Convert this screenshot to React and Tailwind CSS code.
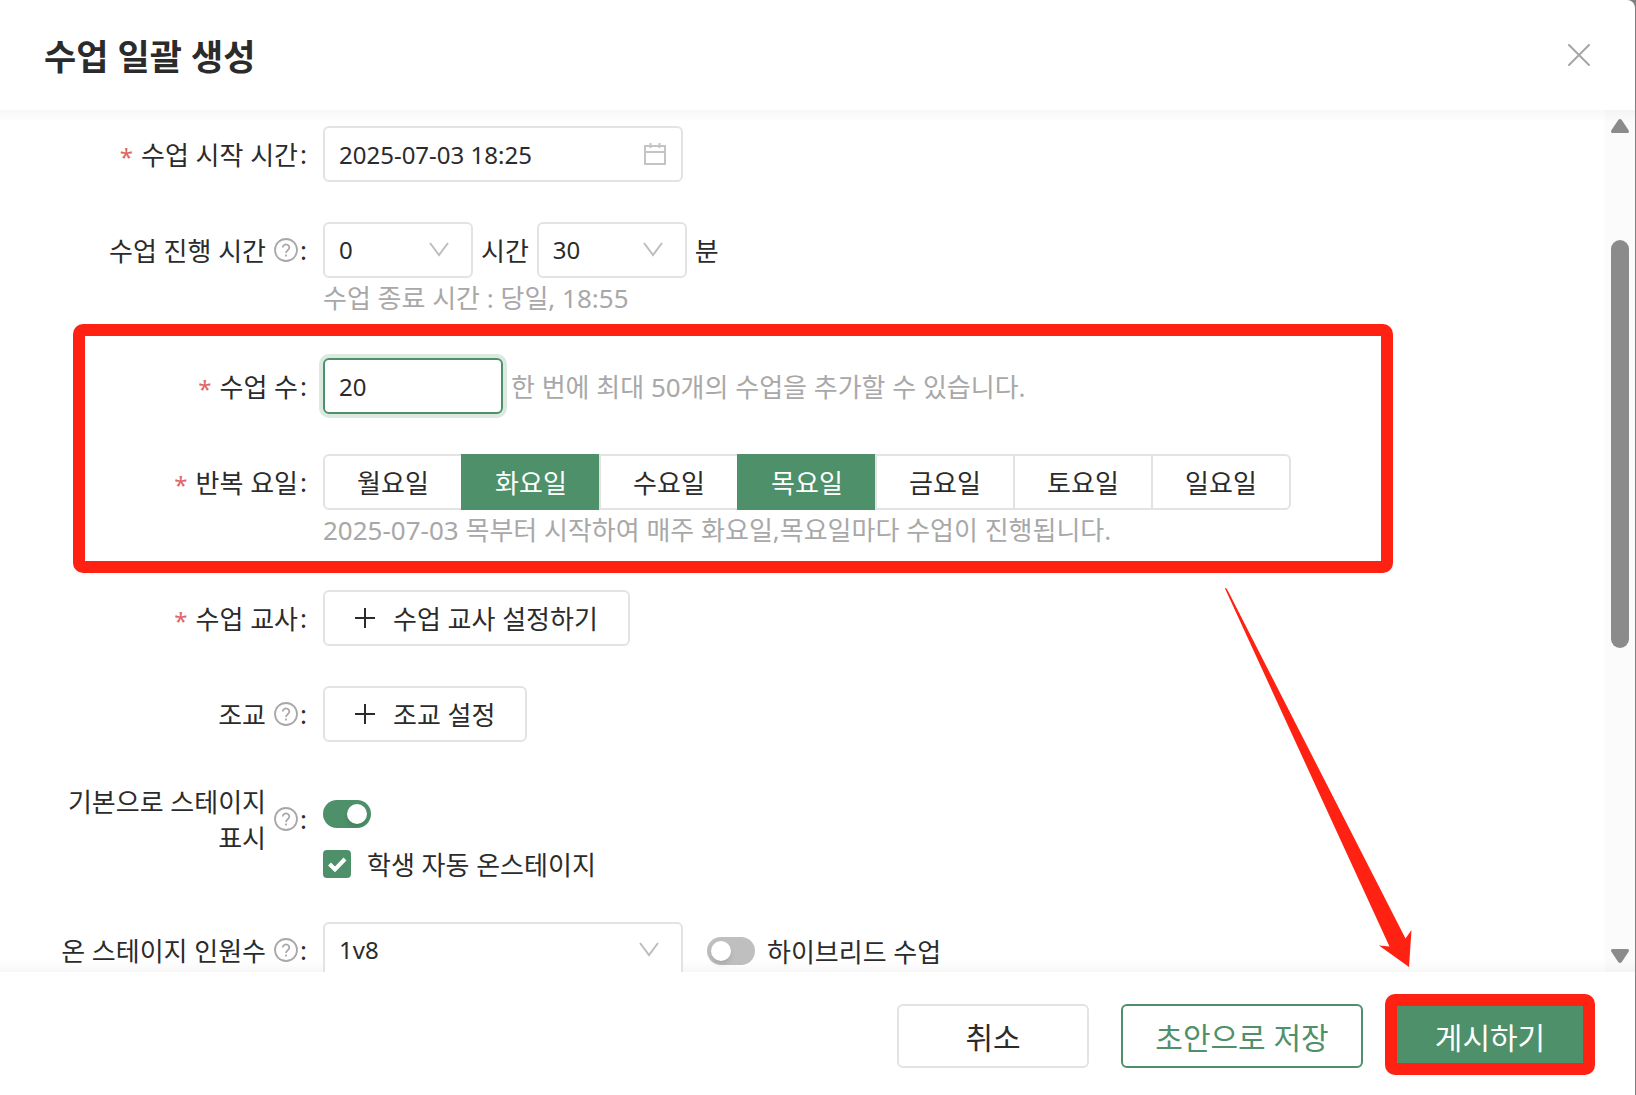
import React, { useState } from 'react';

const DAYS = ['월요일', '화요일', '수요일', '목요일', '금요일', '토요일', '일요일'];

function HelpIcon() {
  return (
    <svg className="size-6 shrink-0 text-[#a8a8a8]" viewBox="0 0 24 24" fill="none" stroke="currentColor" strokeWidth="1.8">
      <circle cx="12" cy="12" r="11" />
      <path d="M8.7 9.6a3.3 3.1 0 1 1 5.2 2.5c-1.1.8-1.9 1.3-1.9 2.9" />
      <path d="M12 16.6v2" />
    </svg>
  );
}

function ChevronIcon() {
  return (
    <svg
      className="pointer-events-none absolute right-6 top-1/2 h-4 w-5 -translate-y-1/2 text-[#bdbdbd]"
      viewBox="0 0 20 16"
      fill="none"
      stroke="currentColor"
      strokeWidth="2"
    >
      <path d="M1 1l9 12 9-12" />
    </svg>
  );
}

function PlusIcon() {
  return (
    <svg className="size-5 shrink-0" viewBox="0 0 20 20" fill="none" stroke="currentColor" strokeWidth="2">
      <path d="M10 0v20M0 10h20" />
    </svg>
  );
}

function FormRow({ label, htmlFor, required, help, children }) {
  return (
    <div className="mb-10 flex items-start gap-4">
      <div className="flex min-h-14 w-[307px] shrink-0 items-center justify-end pl-10 text-right leading-9">
        {required && <span className="mr-2 pt-1.5 text-[24px] text-[#e06666]">*</span>}
        <label htmlFor={htmlFor} className="break-keep pt-0.5">
          {label}
        </label>
        {help && (
          <button type="button" aria-label="도움말" className="ml-2">
            <HelpIcon />
          </button>
        )}
        <span className="ml-0.5">:</span>
      </div>
      <div className="min-w-0 flex-1">{children}</div>
    </div>
  );
}

function SelectBox({ id, label, value, width, onChange, options }) {
  return (
    <div className={`relative ${width}`}>
      <select
        id={id}
        aria-label={label}
        value={value}
        onChange={(e) => onChange(e.target.value)}
        className="h-14 w-full appearance-none rounded-md border-2 border-[#e3e3e3] bg-white px-3.5 text-[24px] outline-none"
      >
        {options.map((option) => (
          <option key={option}>{option}</option>
        ))}
      </select>
      <ChevronIcon />
    </div>
  );
}

function Switch({ id, checked, onChange }) {
  return (
    <input
      id={id}
      type="checkbox"
      role="switch"
      checked={checked}
      onChange={(e) => onChange(e.target.checked)}
      className="h-7 w-12 shrink-0 cursor-pointer appearance-none rounded-full bg-[#bfbfbf] p-1 before:block before:size-5 before:rounded-full before:bg-white before:shadow-md checked:bg-[#4d9069] checked:before:translate-x-5"
    />
  );
}

function AddButton({ id, children }) {
  return (
    <button id={id} type="button" className="flex h-14 items-center gap-[18px] rounded-md border-2 border-[#e3e3e3] bg-white px-[30px]">
      <PlusIcon />
      <span className="pt-0.5">{children}</span>
    </button>
  );
}

function ScrollRail() {
  return (
    <div className="flex w-[30px] shrink-0 flex-col items-center bg-[#fbfbfb] py-[9px] text-[#8b8b8b]">
      <svg className="h-3.5 w-[18px]" viewBox="0 0 18 14" fill="currentColor">
        <path d="M7.2 1Q9-.8 10.8 1l6.8 10.2Q18.6 14 16.5 14h-15Q-.6 14 .4 11.2z" />
      </svg>
      <div className="mt-[107px] h-[408px] w-[18px] rounded-full bg-[#8b8b8b]" />
      <svg className="mt-auto h-3.5 w-[18px]" viewBox="0 0 18 14" fill="currentColor">
        <path d="M7.2 13q1.8 1.8 3.6 0l6.8-10.2Q18.6 0 16.5 0h-15Q-.6 0 .4 2.8z" />
      </svg>
    </div>
  );
}

export default function App() {
  const [startTime, setStartTime] = useState('2025-07-03 18:25');
  const [hours, setHours] = useState('0');
  const [minutes, setMinutes] = useState('30');
  const [count, setCount] = useState('20');
  const [days, setDays] = useState(['화요일', '목요일']);
  const [showOnStage, setShowOnStage] = useState(true);
  const [autoStage, setAutoStage] = useState(true);
  const [seats, setSeats] = useState('1v8');
  const [hybrid, setHybrid] = useState(false);

  const toggleDay = (day) => {
    setDays(days.includes(day) ? days.filter((d) => d !== day) : [...days, day]);
  };

  return (
    <div className="h-screen bg-[#808080] pr-px font-['Noto_Sans','Noto_Sans_CJK_KR',sans-serif] text-[26px] text-[#2b2b2b]">
      <div className="flex h-full flex-col overflow-hidden rounded-tr-lg bg-white">
        <header className="flex h-[110px] shrink-0 items-center justify-between pl-11 pr-[45px]">
          <h1 className="pt-1 text-[35px] font-bold">수업 일괄 생성</h1>
          <button type="button" aria-label="닫기" className="text-[#a6a6a6]">
            <svg className="size-[22px]" viewBox="0 0 22 22" fill="none" stroke="currentColor" strokeWidth="2" strokeLinecap="round">
              <path d="M1 1l20 20M21 1L1 21" />
            </svg>
          </button>
        </header>

        <main className="relative flex min-h-0 flex-1 overflow-hidden">
          <div className="pointer-events-none absolute inset-x-0 top-0 h-3 bg-linear-to-b from-black/3 to-transparent" />
          <div className="pointer-events-none absolute inset-x-0 bottom-0 h-3 bg-linear-to-t from-black/3 to-transparent" />

          <form className="min-w-0 flex-1 pt-4">
            <FormRow label="수업 시작 시간" htmlFor="start" required>
              <div className="relative w-[360px]">
                <input
                  id="start"
                  type="text"
                  value={startTime}
                  onChange={(e) => setStartTime(e.target.value)}
                  className="h-14 w-full rounded-md border-2 border-[#e3e3e3] px-3.5 text-[24px] outline-none"
                />
                <svg
                  className="pointer-events-none absolute right-4 top-4 size-6 text-[#c4c4c4]"
                  viewBox="0 0 24 24"
                  fill="none"
                  stroke="currentColor"
                  strokeWidth="2"
                >
                  <path d="M2 4h20v18H2zM2 10h20M7.5 1v5M16.5 1v5" />
                </svg>
              </div>
            </FormRow>

            <FormRow label="수업 진행 시간" htmlFor="hours" help>
              <div className="flex items-center gap-2">
                <SelectBox id="hours" value={hours} width="w-[150px]" onChange={setHours} options={['0', '1', '2', '3']} />
                <span className="pt-0.5">시간</span>
                <SelectBox label="분" value={minutes} width="w-[150px]" onChange={setMinutes} options={['0', '15', '30', '45']} />
                <span className="pt-0.5">분</span>
              </div>
              <p className="py-0.5 leading-9 text-[#a8a8a8]">수업 종료 시간 : 당일, 18:55</p>
            </FormRow>

            <div className="relative">
              <div className="pointer-events-none absolute -bottom-[23px] -top-[34px] left-[73px] right-[212px] rounded-[10px] border-12 border-[#ff2112]" />
              <FormRow label="수업 수" htmlFor="count" required>
                <div className="flex items-center gap-2">
                  <input
                    id="count"
                    type="text"
                    inputMode="numeric"
                    value={count}
                    onChange={(e) => setCount(e.target.value)}
                    className="h-14 w-[180px] rounded-md border-2 border-[#4d9069] px-3.5 text-[24px] outline-none ring-4 ring-[#dbe9e1]"
                  />
                  <span className="pt-0.5 text-[#a8a8a8]">한 번에 최대 50개의 수업을 추가할 수 있습니다.</span>
                </div>
              </FormRow>

              <FormRow label="반복 요일" required>
                <div className="flex">
                  {DAYS.map((day) => (
                    <button
                      key={day}
                      type="button"
                      aria-pressed={days.includes(day)}
                      onClick={() => toggleDay(day)}
                      className={`-ml-0.5 h-14 w-[140px] border-2 pt-0.5 first:ml-0 first:rounded-l-md last:rounded-r-md ${
                        days.includes(day) ? 'border-[#4d9069] bg-[#4d9069] text-white' : 'border-[#e3e3e3] bg-white'
                      }`}
                    >
                      {day}
                    </button>
                  ))}
                </div>
                <p className="py-0.5 leading-9 text-[#a8a8a8]">2025-07-03 목부터 시작하여 매주 화요일,목요일마다 수업이 진행됩니다.</p>
              </FormRow>
            </div>

            <FormRow label="수업 교사" htmlFor="teacher" required>
              <AddButton id="teacher">수업 교사 설정하기</AddButton>
            </FormRow>

            <FormRow label="조교" htmlFor="assistant" help>
              <AddButton id="assistant">조교 설정</AddButton>
            </FormRow>

            <FormRow label="기본으로 스테이지 표시" htmlFor="stage" help>
              <div className="flex h-16 items-center">
                <Switch id="stage" checked={showOnStage} onChange={setShowOnStage} />
              </div>
              <label className="flex h-9 items-center gap-4">
                <span className="relative size-7">
                  <input
                    type="checkbox"
                    checked={autoStage}
                    onChange={(e) => setAutoStage(e.target.checked)}
                    className="peer block size-7 appearance-none rounded-sm border-2 border-[#bfbfbf] checked:border-[#4d9069] checked:bg-[#4d9069]"
                  />
                  <svg
                    className="pointer-events-none absolute inset-0 hidden size-7 text-white peer-checked:block"
                    viewBox="0 0 28 28"
                    fill="none"
                    stroke="currentColor"
                    strokeWidth="4"
                  >
                    <path d="M6.500 14l5.500 5.500L22 9" />
                  </svg>
                </span>
                <span className="pt-0.5">학생 자동 온스테이지</span>
              </label>
            </FormRow>

            <FormRow label="온 스테이지 인원수" htmlFor="seats" help>
              <div className="flex items-center">
                <SelectBox id="seats" value={seats} width="w-[360px]" onChange={setSeats} options={['1v1', '1v4', '1v8']} />
                <label className="ml-6 flex items-center gap-3 pt-0.5">
                  <Switch checked={hybrid} onChange={setHybrid} />
                  <span className="pt-0.5">하이브리드 수업</span>
                </label>
              </div>
            </FormRow>
          </form>

          <ScrollRail />

          <svg className="pointer-events-none absolute right-[219px] top-[474px] h-[386px] w-[196px]" viewBox="0 0 196 386" fill="#ff2112">
            <path d="M5 4.500Q6 3 8 7L185.500 354.500 191.500 346 189 383 159 361.500 169.500 362.500z" />
          </svg>
        </main>

        <footer className="flex h-[123px] shrink-0 items-center justify-end gap-8 bg-white pr-[50px] pt-[5px] text-[30px]">
          <button type="button" className="h-16 w-48 rounded-md border-2 border-[#e3e3e3] pt-0.5">
            취소
          </button>
          <button type="button" className="h-16 w-[242px] rounded-md border-2 border-[#4d9069] pt-0.5 text-[#4d9069]">
            초안으로 저장
          </button>
          <div className="relative">
            <button type="button" className="h-16 w-[190px] rounded-md bg-[#4d9069] pt-0.5 text-white">
              게시하기
            </button>
            <div className="pointer-events-none absolute -inset-x-[10px] -bottom-[7px] -top-[10px] rounded-[10px] border-12 border-[#ff2112]" />
          </div>
        </footer>
      </div>
    </div>
  );
}
